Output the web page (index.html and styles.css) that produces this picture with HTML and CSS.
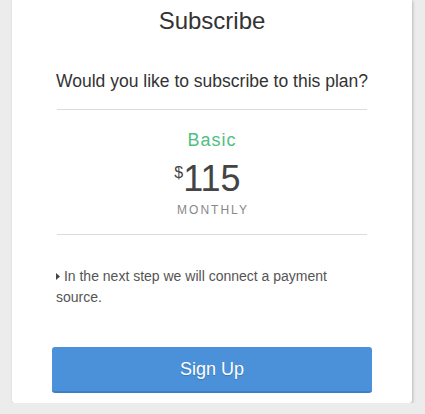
FILE: index.html
```html
<!DOCTYPE html>
<html>
<head>
<meta charset="utf-8">
<link rel="stylesheet" href="styles.css">
</head>
<body>
<div class="card">
  <h1 class="title">Subscribe</h1>
  <p class="question">Would you like to subscribe to this plan?</p>
  <hr class="divider">
  <div class="plan">
    <div class="plan-name">Basic</div>
    <div class="price"><span class="currency">$</span><span class="amount">115</span></div>
    <div class="period">MONTHLY</div>
  </div>
  <hr class="divider">
  <p class="note"><svg class="caret" width="4" height="7" viewBox="0 0 4 7"><path d="M0 0 L4 3.5 L0 7 Z" fill="#444"/></svg> In the next step we will connect a payment source.</p>
  <button class="btn">Sign Up</button>
</div>
</body>
</html>
```
FILE: styles.css
```css
html, body {
  margin: 0;
  padding: 0;
}
body {
  background: #ececec;
  font-family: "Liberation Sans", Arial, Helvetica, sans-serif;
  color: #333;
}
.card {
  width: 400px;
  margin-left: 12px;
  box-sizing: border-box;
  background: #fff;
  border-radius: 0 0 3px 3px;
  box-shadow: 1px 1px 3px rgba(0, 0, 0, 0.22);
  padding: 7px 40px 10px;
  display: flex;
  flex-direction: column;
}
.title {
  margin: 0;
  font-size: 24px;
  line-height: 28px;
  font-weight: normal;
  text-align: center;
  color: #333;
}
.question {
  margin: 34px 0 0;
  font-size: 17.5px;
  line-height: 24px;
  text-align: center;
  color: #333;
}
.divider {
  border: 0;
  height: 1px;
  background: #dcdcdc;
  margin: 16px 5px 0;
}
.plan {
  display: flex;
  flex-direction: column;
  align-items: center;
}
.plan-name {
  margin-top: 18px;
  font-size: 18px;
  line-height: 24px;
  letter-spacing: 1px;
  color: #4fc07f;
}
.price {
  margin-top: 7px;
  display: flex;
  align-items: flex-start;
  justify-content: center;
  color: #444;
}
.currency {
  font-size: 16px;
  line-height: 16px;
  margin-top: 6px;
  margin-left: -9px;
}
.amount {
  font-size: 36px;
  line-height: 40px;
}
.period {
  margin-top: 3px;
  font-size: 12px;
  line-height: 16px;
  letter-spacing: 2px;
  color: #888;
  padding-left: 2px;
}
.plan + .divider {
  margin-top: 16px;
}
.note {
  margin: 31px 0 0 4px;
  font-size: 14px;
  line-height: 21px;
  color: #555;
}
.caret {
  vertical-align: 1px;
}
.btn {
  margin-top: 39px;
  height: 46px;
  border: 0;
  border-bottom: 2px solid #3d7fc6;
  border-radius: 3px;
  background: #4a91d9;
  color: #fff;
  font-family: "Liberation Sans", Arial, Helvetica, sans-serif;
  font-size: 18px;
  text-shadow: 0 1px 1px rgba(0, 0, 0, 0.2);
  padding: 0;
}
```
